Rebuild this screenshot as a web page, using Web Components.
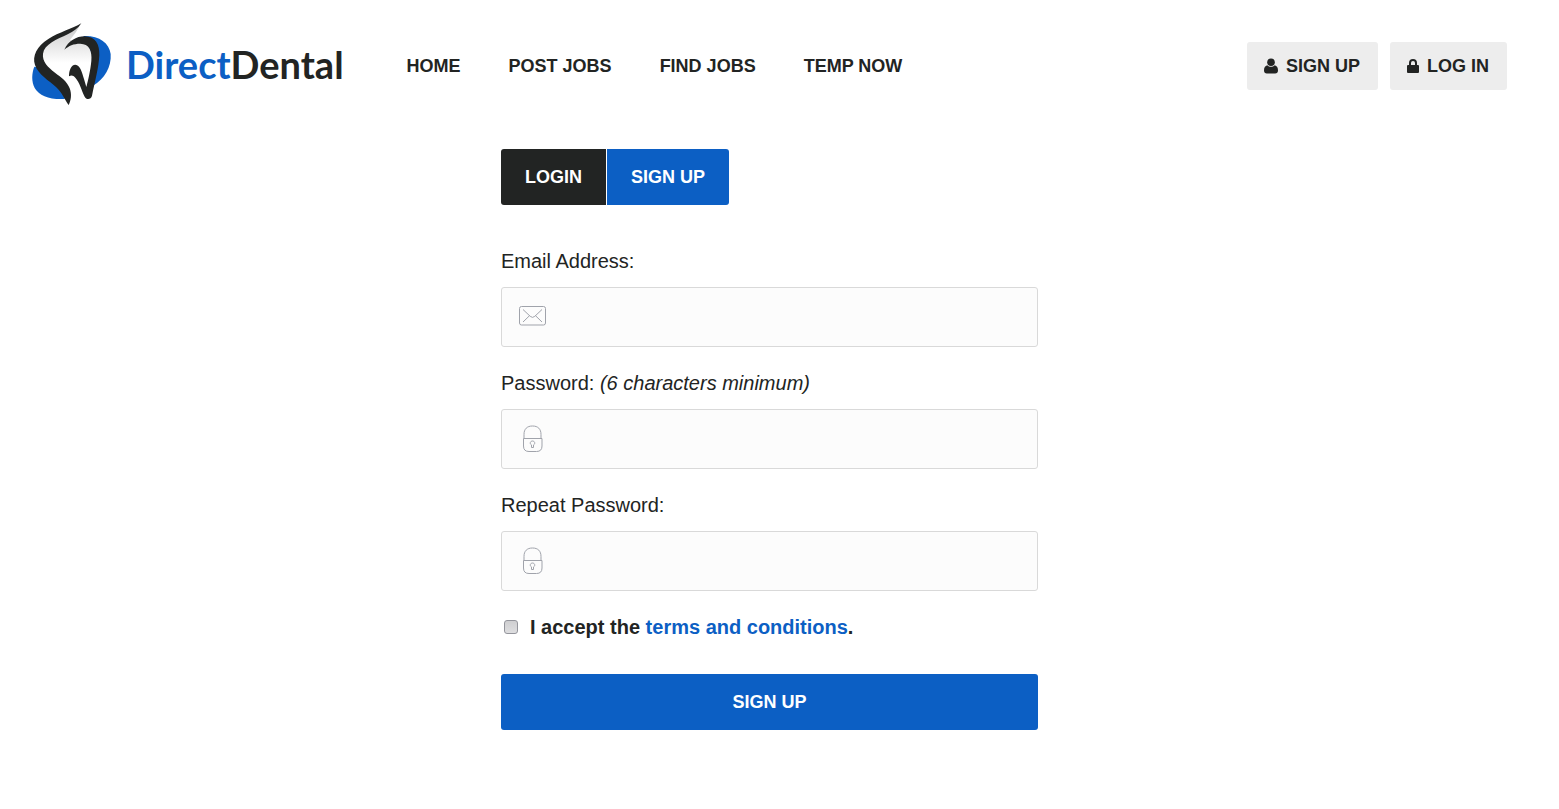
<!DOCTYPE html>
<html lang="en">
<head>
  <meta charset="UTF-8">
  <meta name="viewport" content="width=device-width, initial-scale=1.0">
  <title>DirectDental - Sign Up</title>
  <style>
    body {
      --blue: #0c5fc4;
      --dark: #222423;
      margin: 0;
      background: #fff;
      color: var(--dark);
      font: 20px/24px "Liberation Sans", Arial, sans-serif;
    }
  </style>
</head>

<body>
  <dd-page>
    <dd-header slot="header">
      <dd-logo slot="logo"></dd-logo>
      <dd-nav-link href="#home">HOME</dd-nav-link>
      <dd-nav-link href="#post">POST JOBS</dd-nav-link>
      <dd-nav-link href="#find">FIND JOBS</dd-nav-link>
      <dd-nav-link href="#temp">TEMP NOW</dd-nav-link>
      <dd-account-link slot="account" href="#signup" icon="user">SIGN UP</dd-account-link>
      <dd-account-link slot="account" href="#login" icon="lock">LOG IN</dd-account-link>
    </dd-header>
    <dd-signup-form></dd-signup-form>
  </dd-page>

  <script>
    const icons = {
      user: `<svg width="16" height="16" viewBox="0 0 16 16" fill="currentColor" aria-hidden="true">
        <circle cx="8" cy="4.2" r="3.8"/>
        <path d="M4.3 7.2C2 7.8 1 9.8 1 12.4 1 14.2 2.1 15.5 3.8 15.5h8.4c1.7 0 2.8-1.3 2.8-3.1 0-2.6-1-4.6-3.3-5.200C9.600 9.400 6.400 9.400 4.300 7.200z"/>
      </svg>`,
      lock: `<svg width="14" height="16" viewBox="0 0 14 16" fill="currentColor" aria-hidden="true">
        <path d="M3 7V5a4 4 0 0 1 8 0v2h1a1 1 0 0 1 1 1v6a1 1 0 0 1-1 1H2a1 1 0 0 1-1-1V8a1 1 0 0 1 1-1zM5 7h4V5a2 2 0 0 0-4 0z" fill-rule="evenodd"/>
      </svg>`,
      mail: `<svg width="28" height="28" viewBox="0 0 28 28" fill="none" stroke="#a0a3ab" aria-hidden="true">
        <rect x=".5" y="3.5" width="26" height="18.5" rx="2"/>
        <path d="M4 6.500l7.200 6.800q2.300 2.200 4.600 0l7.200-6.800M4 19l6.500-6.300M23 19l-6.500-6.300"/>
      </svg>`,
      padlock: `<svg width="28" height="28" viewBox="0 0 28 28" fill="none" stroke="#a0a3ab" aria-hidden="true">
        <path d="M5 13.500V9.500C5 4 8 1 13.500 1S22 4 22 9.500v4M4.500 13.500h18.500V21q0 5.500-5.500 5.500h-7.500Q4.500 26.500 4.500 21z"/>
        <path d="M12.500 20C10.300 18.600 11.300 16 13.500 16s3.200 2.600 1 4v2.500h-2z"/>
      </svg>`
    }

    customElements.define("dd-page", class extends HTMLElement {
      constructor() {
        super()
        this.attachShadow({ mode: "open" })
        this.shadowRoot.innerHTML = `<style>
          :host {
            display: block;
            padding: 23px 52px 40px 32px;
          }

          main {
            max-width: 537px;
            margin: 44px auto 0;
          }
        </style>
        <slot name="header"></slot>
        <main><slot></slot></main>`
      }
    })

    customElements.define("dd-header", class extends HTMLElement {
      constructor() {
        super()
        this.attachShadow({ mode: "open" })
        this.shadowRoot.innerHTML = `<style>
          :host {
            display: block;
          }

          header, nav, .account {
            display: flex;
            align-items: center;
          }

          header {
            gap: 63px;
          }

          nav {
            gap: 48px;
            padding-top: 2px;
          }

          .account {
            gap: 12px;
            margin-left: auto;
            padding-top: 4px;
          }
        </style>
        <header>
          <slot name="logo"></slot>
          <nav><slot></slot></nav>
          <div class="account"><slot name="account"></slot></div>
        </header>`
      }
    })

    customElements.define("dd-logo", class extends HTMLElement {
      constructor() {
        super()
        this.attachShadow({ mode: "open" })
        this.shadowRoot.innerHTML = `<style>
          :host {
            display: block;
          }

          a {
            display: flex;
            align-items: center;
            gap: 14px;
            color: var(--dark);
            font: 700 38px/48px Lato, sans-serif;
            text-decoration: none;
          }

          .direct {
            color: var(--blue);
          }
        </style>
        <a href="#home">
          <svg width="80" height="82" viewBox="36 39 240 246" aria-hidden="true">
            <defs>
              <linearGradient id="shade" x1="0" y1="0" x2="0" y2="1">
                <stop offset="0" stop-color="#c9c9c9"/>
                <stop offset=".6" stop-color="#fff"/>
              </linearGradient>
            </defs>
            <path d="M43 170C35 190 34 215 44 234C58 258 88 269 134 267L138 235L90 180z" fill="#0c5fc4"/>
            <path d="M190 78C236 76 268 98 272 132C275 170 253 208 219 227L214 130z" fill="#0c5fc4"/>
            <path d="M181 44C150 68 100 84 76 106C62 122 62 148 75 164C95 188 125 196 143 229L152 225L150 190L170 168L202 236L218 140L200 90L150 90L168 66z" fill="url(#shade)"/>
            <path d="M184 40C157 57 117 66 85 87C51 108 36 138 45 165C55 194 86 211 108 231C127 248 134 270 146 285C153 272 156 253 149 235C142 214 122 201 105 188C84 172 66 154 69 131C73 103 111 88 143 73C161 65 174 55 184 40z" fill="#222423"/>
            <path d="M133 119C145 93 169 79 194 79C227 80 239 103 238 136C236 174 225 214 216 257C213 269 199 270 194 260C184 240 179 217 166 203C160 196 154 194 147 199C147 181 153 165 166 164C181 165 186 187 192 207L199 231C204 212 211 184 214 153C217 121 207 102 181 101C160 101 147 107 133 119z" fill="#222423"/>
          </svg>
          <span><span class="direct">Direct</span>Dental</span>
        </a>`
      }
    })

    customElements.define("dd-nav-link", class extends HTMLElement {
      constructor() {
        super()
        this.attachShadow({ mode: "open" })
      }

      connectedCallback() {
        this.shadowRoot.innerHTML = `<style>
          :host {
            display: block;
          }

          a {
            color: var(--dark);
            font-size: 18px;
            font-weight: bold;
            text-decoration: none;
            white-space: nowrap;
          }
        </style>
        <a href="${this.getAttribute("href")}"><slot></slot></a>`
      }
    })

    customElements.define("dd-account-link", class extends HTMLElement {
      constructor() {
        super()
        this.attachShadow({ mode: "open" })
      }

      connectedCallback() {
        this.shadowRoot.innerHTML = `<style>
          :host {
            display: block;
          }

          a {
            display: flex;
            align-items: center;
            gap: 7px;
            padding: 12px 18px 12px 16px;
            border-radius: 3px;
            background: #ededed;
            color: var(--dark);
            font-size: 18px;
            font-weight: bold;
            text-decoration: none;
            white-space: nowrap;
          }
        </style>
        <a href="${this.getAttribute("href")}">${icons[this.getAttribute("icon")]}<span><slot></slot></span></a>`
      }
    })

    customElements.define("dd-tabs", class extends HTMLElement {
      constructor() {
        super()
        this.attachShadow({ mode: "open" })
        this.shadowRoot.innerHTML = `<style>
          :host {
            display: flex;
            gap: 1px;
          }

          button {
            padding: 16px 24px;
            border: 0;
            background: var(--dark);
            color: #fff;
            font: bold 18px/24px "Liberation Sans", Arial, sans-serif;
            cursor: pointer;
          }

          button:first-of-type {
            border-radius: 3px 0 0 3px;
          }

          button:last-of-type {
            border-radius: 0 3px 3px 0;
          }

          button.active {
            background: var(--blue);
          }
        </style>`
        this.addTab("LOGIN", false)
        this.addTab("SIGN UP", true)
      }

      addTab(text, active) {
        const btn = document.createElement("button")
        btn.type = "button"
        btn.textContent = text
        btn.classList.toggle("active", active)
        btn.addEventListener("click", () => this.select(btn))
        this.shadowRoot.appendChild(btn)
      }

      select(tab) {
        this.shadowRoot.querySelectorAll("button").forEach(btn => {
          btn.classList.toggle("active", btn === tab)
        })
      }
    })

    customElements.define("dd-field", class extends HTMLElement {
      constructor() {
        super()
        this.attachShadow({ mode: "open" })
      }

      connectedCallback() {
        this.shadowRoot.innerHTML = `<style>
          :host {
            display: block;
          }

          label {
            display: block;
            margin-bottom: 14px;
          }

          .box {
            display: flex;
            align-items: center;
            gap: 16px;
            padding: 0 17px;
            border: 1px solid #d9d9d9;
            border-radius: 3px;
            background: #fcfcfc;
          }

          svg {
            flex: none;
          }

          input {
            flex: 1;
            min-width: 0;
            padding: 17px 0;
            border: 0;
            outline: 0;
            background: transparent;
            color: inherit;
            font: inherit;
          }

          .box:focus-within {
            border-color: var(--blue);
          }
        </style>
        <label for="input"><slot></slot></label>
        <div class="box">
          ${icons[this.getAttribute("icon")]}
          <input id="input" type="${this.getAttribute("type")}">
        </div>`
      }
    })

    customElements.define("dd-accept", class extends HTMLElement {
      constructor() {
        super()
        this.attachShadow({ mode: "open" })
        this.shadowRoot.innerHTML = `<style>
          :host {
            display: flex;
            align-items: center;
            gap: 12px;
            padding-left: 3px;
            font-weight: bold;
          }

          input {
            appearance: none;
            width: 14px;
            height: 14px;
            margin: 0;
            border: 1px solid #94959c;
            border-radius: 3px;
            background: linear-gradient(#cfcfd1, #dedee0);
          }

          input:checked {
            background: var(--blue);
          }

          a {
            color: var(--blue);
            text-decoration: none;
          }
        </style>
        <input id="accept" type="checkbox">
        <label for="accept">I accept the <a href="#terms">terms and conditions</a>.</label>`
      }
    })

    customElements.define("dd-signup-form", class extends HTMLElement {
      constructor() {
        super()
        this.attachShadow({ mode: "open" })
        this.shadowRoot.innerHTML = `<style>
          :host {
            display: block;
          }

          form {
            display: flex;
            flex-direction: column;
            gap: 24px;
            margin-top: 44px;
          }

          button {
            margin-top: 11px;
            padding: 16px;
            border: 0;
            border-radius: 3px;
            background: var(--blue);
            color: #fff;
            font: bold 18px/24px "Liberation Sans", Arial, sans-serif;
            cursor: pointer;
          }
        </style>
        <dd-tabs></dd-tabs>
        <form>
          <dd-field type="email" icon="mail">Email Address:</dd-field>
          <dd-field type="password" icon="padlock">Password: <em>(6 characters minimum)</em></dd-field>
          <dd-field type="password" icon="padlock">Repeat Password:</dd-field>
          <dd-accept></dd-accept>
          <button type="submit">SIGN UP</button>
        </form>`
        this.shadowRoot.querySelector("form").addEventListener("submit", e => e.preventDefault())
      }
    })
  </script>
</body>
</html>
